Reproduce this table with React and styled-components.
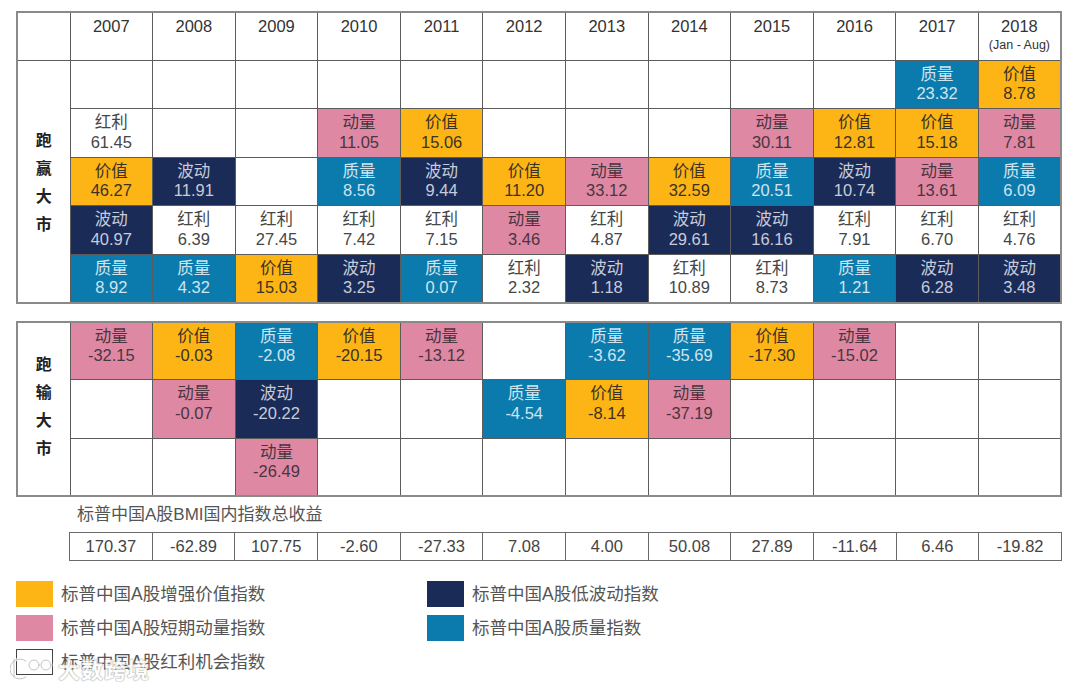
import React from "react";
import styled, { createGlobalStyle } from "styled-components";

const Global = createGlobalStyle`
  html, body { margin: 0; padding: 0; background: #fff; }
  body { font-family: "Liberation Sans", "Noto Sans CJK SC", sans-serif; }
`;

const PAL = {
  价值: { bg: "#FDB515", fg: "#3b3226" },
  动量: { bg: "#DF88A4", fg: "#4a3540" },
  波动: { bg: "#1B2B57", fg: "#c6ccda" },
  质量: { bg: "#0B7BAD", fg: "#cfe4ef" },
  红利: { bg: "#ffffff", fg: "#464646" },
};

const YEARS = ["2007", "2008", "2009", "2010", "2011", "2012", "2013", "2014", "2015", "2016", "2017", "2018"];

const n = null;
const WIN = [
  [n, n, n, n, n, n, n, n, n, n, ["质量", "23.32"], ["价值", "8.78"]],
  [["红利", "61.45"], n, n, ["动量", "11.05"], ["价值", "15.06"], n, n, n, ["动量", "30.11"], ["价值", "12.81"], ["价值", "15.18"], ["动量", "7.81"]],
  [["价值", "46.27"], ["波动", "11.91"], n, ["质量", "8.56"], ["波动", "9.44"], ["价值", "11.20"], ["动量", "33.12"], ["价值", "32.59"], ["质量", "20.51"], ["波动", "10.74"], ["动量", "13.61"], ["质量", "6.09"]],
  [["波动", "40.97"], ["红利", "6.39"], ["红利", "27.45"], ["红利", "7.42"], ["红利", "7.15"], ["动量", "3.46"], ["红利", "4.87"], ["波动", "29.61"], ["波动", "16.16"], ["红利", "7.91"], ["红利", "6.70"], ["红利", "4.76"]],
  [["质量", "8.92"], ["质量", "4.32"], ["价值", "15.03"], ["波动", "3.25"], ["质量", "0.07"], ["红利", "2.32"], ["波动", "1.18"], ["红利", "10.89"], ["红利", "8.73"], ["质量", "1.21"], ["波动", "6.28"], ["波动", "3.48"]],
];

const LOSE = [
  [["动量", "-32.15"], ["价值", "-0.03"], ["质量", "-2.08"], ["价值", "-20.15"], ["动量", "-13.12"], n, ["质量", "-3.62"], ["质量", "-35.69"], ["价值", "-17.30"], ["动量", "-15.02"], n, n],
  [n, ["动量", "-0.07"], ["波动", "-20.22"], n, n, ["质量", "-4.54"], ["价值", "-8.14"], ["动量", "-37.19"], n, n, n, n],
  [n, n, ["动量", "-26.49"], n, n, n, n, n, n, n, n, n],
];

const RETURNS = ["170.37", "-62.89", "107.75", "-2.60", "-27.33", "7.08", "4.00", "50.08", "27.89", "-11.64", "6.46", "-19.82"];

const Page = styled.div`
  position: relative;
  width: 1080px;
  height: 689px;
  padding: 11px 0 0 16px;
  box-sizing: border-box;
  overflow: hidden;
`;

const Grid = styled.table`
  width: 1046px;
  table-layout: fixed;
  border-collapse: collapse;
  border: 2px solid #8a8a8a;
  margin-top: ${(p) => p.$mt || 0}px;
`;

const LabelCol = styled.col`
  width: 53px;
`;

const HeadRow = styled.tr`
  height: 48px;
`;

const HeadCell = styled.th`
  padding: 4px 0 0;
  vertical-align: top;
  font-weight: 400;
  font-size: 16.5px;
  line-height: 19px;
  color: #333;
  border: 1px solid #5c5c5c;
`;

const Sub = styled.div`
  font-size: 12.5px;
  line-height: 14px;
  margin-top: 2px;
  color: #333;
`;

const Row = styled.tr`
  height: ${(p) => p.$h}px;
`;

const SideCell = styled.td`
  border: 1px solid #5c5c5c;
  padding: 0;
  vertical-align: middle;
`;

const SideLabel = styled.div`
  display: flex;
  flex-direction: column;
  align-items: center;
  font-family: "Noto Sans CJK SC", sans-serif;
  font-weight: 700;
  font-size: 16px;
  line-height: 28px;
  color: #222;
  margin-top: ${(p) => p.$shift || 0}px;
`;

const Cell = styled.td`
  border: 1px solid #5c5c5c;
  background: ${(p) => p.$bg};
  color: ${(p) => p.$fg};
  padding: ${(p) => (p.$top ? "4px 0 0" : "0")};
  vertical-align: ${(p) => (p.$top ? "top" : "middle")};
  text-align: center;
  font-size: 16.5px;
  line-height: 19.5px;
`;

const Name = styled.div`
  font-family: "Liberation Sans", "Noto Sans CJK SC", sans-serif;
`;

const Val = styled.div`
  font-family: "Liberation Sans", sans-serif;
`;

const BmiTitle = styled.div`
  margin: 7px 0 0 61px;
  font-size: 17px;
  line-height: 22px;
  color: #555;
`;

const Returns = styled.table`
  margin: 6px 0 0 53px;
  width: 993px;
  table-layout: fixed;
  border-collapse: collapse;
  border: 1.5px solid #555;
`;

const RetCell = styled.td`
  height: 27px;
  padding: 0;
  border: 1px solid #6a6a6a;
  text-align: center;
  font-size: 16.5px;
  color: #444;
`;

const Legend = styled.div`
  display: grid;
  grid-template-columns: 411px 300px;
  grid-auto-rows: 34px;
  margin-top: 20px;
`;

const LegendItem = styled.div`
  display: flex;
  align-items: flex-start;
  gap: 8px;
`;

const Swatch = styled.div`
  width: 37px;
  height: 26px;
  box-sizing: border-box;
  background: ${(p) => p.$bg};
  border: ${(p) => (p.$outline ? "1.5px solid #444" : "none")};
  flex-shrink: 0;
`;

const LegendText = styled.span`
  font-size: 17.5px;
  line-height: 26px;
  color: #555;
`;

const Watermark = styled.div`
  position: absolute;
  left: 10px;
  top: 652px;
  display: flex;
  align-items: center;
  gap: 4px;
  opacity: 0.85;
  pointer-events: none;
`;

const WmText = styled.span`
  font-family: "Noto Sans CJK SC", sans-serif;
  font-size: 22px;
  font-weight: 700;
  color: #fff;
  letter-spacing: 1px;
  text-shadow: 0 0 1px #9a9a9a, 0 0 1px #9a9a9a, 0 0 2px #bbb;
`;

function DataCell({ item, top }) {
  if (!item) return <Cell $bg="#fff" $fg="#444" $top={top} />;
  const c = PAL[item[0]];
  return (
    <Cell $bg={c.bg} $fg={c.fg} $top={top}>
      <Name>{item[0]}</Name>
      <Val>{item[1]}</Val>
    </Cell>
  );
}

function Cols() {
  return (
    <colgroup>
      <LabelCol />
      {YEARS.map((y) => (
        <col key={y} />
      ))}
    </colgroup>
  );
}

export default function App() {
  return (
    <Page>
      <Global />
      <Grid>
        <Cols />
        <thead>
          <HeadRow>
            <HeadCell />
            {YEARS.map((y) => (
              <HeadCell key={y}>
                {y}
                {y === "2018" && <Sub>(Jan - Aug)</Sub>}
              </HeadCell>
            ))}
          </HeadRow>
        </thead>
        <tbody>
          {WIN.map((r, i) => (
            <Row key={i} $h={48.5}>
              {i === 0 && (
                <SideCell rowSpan={5}>
                  <SideLabel>
                    <span>跑</span>
                    <span>赢</span>
                    <span>大</span>
                    <span>市</span>
                  </SideLabel>
                </SideCell>
              )}
              {r.map((it, j) => (
                <DataCell key={j} item={it} />
              ))}
            </Row>
          ))}
        </tbody>
      </Grid>

      <Grid $mt={17}>
        <Cols />
        <tbody>
          {LOSE.map((r, i) => (
            <Row key={i} $h={58.3}>
              {i === 0 && (
                <SideCell rowSpan={3}>
                  <SideLabel $shift={-8}>
                    <span>跑</span>
                    <span>输</span>
                    <span>大</span>
                    <span>市</span>
                  </SideLabel>
                </SideCell>
              )}
              {r.map((it, j) => (
                <DataCell key={j} item={it} top />
              ))}
            </Row>
          ))}
        </tbody>
      </Grid>

      <BmiTitle>标普中国A股BMI国内指数总收益</BmiTitle>
      <Returns>
        <tbody>
          <tr>
            {RETURNS.map((v, i) => (
              <RetCell key={i}>{v}</RetCell>
            ))}
          </tr>
        </tbody>
      </Returns>

      <Legend>
        <LegendItem>
          <Swatch $bg="#FDB515" />
          <LegendText>标普中国A股增强价值指数</LegendText>
        </LegendItem>
        <LegendItem>
          <Swatch $bg="#1B2B57" />
          <LegendText>标普中国A股低波动指数</LegendText>
        </LegendItem>
        <LegendItem>
          <Swatch $bg="#DF88A4" />
          <LegendText>标普中国A股短期动量指数</LegendText>
        </LegendItem>
        <LegendItem>
          <Swatch $bg="#0B7BAD" />
          <LegendText>标普中国A股质量指数</LegendText>
        </LegendItem>
        <LegendItem>
          <Swatch $bg="#fff" $outline />
          <LegendText>标普中国A股红利机会指数</LegendText>
        </LegendItem>
      </Legend>

      <Watermark>
        <svg width="44" height="30" viewBox="0 0 44 30">
          <g fill="none" stroke="#fff" strokeWidth="3" strokeLinecap="round">
            <path d="M4 6 L4 24" />
            <path d="M16 8 A10 10 0 1 0 16 24" />
            <circle cx="24" cy="12" r="5" />
            <circle cx="36" cy="12" r="5" />
          </g>
          <g fill="none" stroke="#aaa" strokeWidth="0.8" strokeLinecap="round">
            <path d="M4 6 L4 24" />
            <path d="M16 8 A10 10 0 1 0 16 24" />
            <circle cx="24" cy="12" r="5" />
            <circle cx="36" cy="12" r="5" />
          </g>
        </svg>
        <WmText>大数跨境</WmText>
      </Watermark>
    </Page>
  );
}
